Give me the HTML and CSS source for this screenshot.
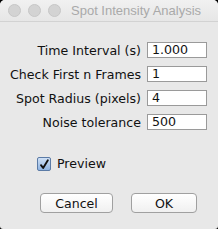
FILE: index.html
```html
<!DOCTYPE html>
<html lang="en">
<head>
    <meta charset="UTF-8">
    <title>Spot Intensity Analysis</title>
    <link rel="stylesheet" href="styles.css">
</head>
<body>
    <div class="window">
        <!-- Title bar -->
        <div class="titlebar">
            <div class="lights">
                <span class="light"></span>
                <span class="light"></span>
                <span class="light"></span>
            </div>
            <div class="title">Spot Intensity Analysis</div>
        </div>

        <div class="content">
            <div class="fields">
                <label class="field-label">Time Interval (s)</label>
                <div class="field-box">1.000</div>
                <label class="field-label">Check First n Frames</label>
                <div class="field-box">1</div>
                <label class="field-label">Spot Radius (pixels)</label>
                <div class="field-box">4</div>
                <label class="field-label">Noise tolerance</label>
                <div class="field-box">500</div>
            </div>

            <div class="preview-row">
                <span class="checkbox">
                    <svg width="14" height="14" viewBox="0 0 14 14">
                        <path d="M3.5 7.2 L6 10.5 L11.5 1.5" fill="none" stroke="#111" stroke-width="2.2" stroke-linecap="round" stroke-linejoin="round"/>
                    </svg>
                </span>
                <span class="preview-label">Preview</span>
            </div>

            <div class="buttons">
                <button class="btn cancel">Cancel</button>
                <button class="btn ok">OK</button>
            </div>
        </div>
    </div>
</body>
</html>
```

FILE: styles.css
```css
body {
    margin: 0;
    padding: 0;
    background-color: #000;
    font-family: "DejaVu Sans", sans-serif;
}
.window {
    width: 218px;
    height: 229px;
    background-color: #e8e8e8;
    border-radius: 5px 5px 3px 3px;
    overflow: hidden;
    display: flex;
    flex-direction: column;
}
/* Title bar */
.titlebar {
    height: 22px;
    box-sizing: border-box;
    display: flex;
    align-items: center;
    background: linear-gradient(#f1f1f1, #e6e6e6);
    border-bottom: 1px solid #d2d2d2;
}
.lights {
    display: flex;
    gap: 7px;
    padding-left: 8px;
}
.light {
    width: 11px;
    height: 11px;
    border-radius: 50%;
    background-color: #d3d3d3;
    border: 0.5px solid #c6c6c6;
}
.title {
    margin-left: 10px;
    font-family: "Liberation Sans", sans-serif;
    font-size: 13px;
    color: #a9a9a9;
    white-space: nowrap;
}
/* Form */
.content {
    display: flex;
    flex-direction: column;
    padding-top: 20px;
}
.fields {
    display: grid;
    grid-template-columns: 141px 60px;
    column-gap: 6px;
    row-gap: 8px;
    align-items: center;
}
.field-label {
    text-align: right;
    font-size: 12.6px;
    color: #111;
    white-space: nowrap;
}
.field-box {
    height: 16px;
    box-sizing: border-box;
    border: 1px solid #9a9a9a;
    background-color: #fff;
    font-size: 12.6px;
    line-height: 14px;
    padding-left: 4px;
    color: #111;
}
.preview-row {
    display: flex;
    align-items: center;
    margin-top: 26px;
    padding-left: 37px;
}
.checkbox {
    width: 14px;
    height: 14px;
    box-sizing: border-box;
    border: 1px solid #5b7ba6;
    border-radius: 2px;
    background: linear-gradient(#cfe0f5, #8fb4e2);
    display: flex;
}
.preview-label {
    margin-left: 6px;
    font-size: 12.6px;
    color: #111;
}
.buttons {
    display: flex;
    gap: 18px;
    margin-top: 22px;
    padding-left: 40px;
}
.btn {
    height: 20px;
    box-sizing: border-box;
    border: 1px solid #a0a0a0;
    border-radius: 4px;
    background: linear-gradient(#ffffff, #f0f0f0);
    font-family: "DejaVu Sans", sans-serif;
    font-size: 12.6px;
    color: #111;
    padding: 0;
}
.cancel {
    width: 73px;
}
.ok {
    width: 66px;
}
```
